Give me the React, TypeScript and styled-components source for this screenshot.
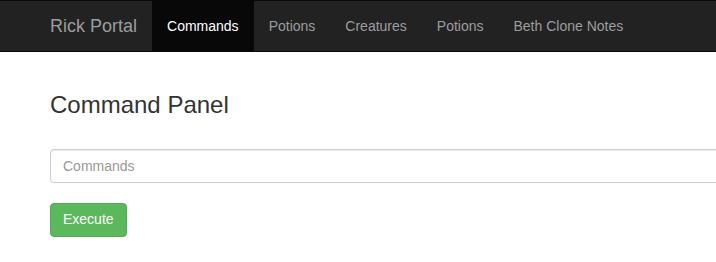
import React from "react";
import styled, { createGlobalStyle } from "styled-components";

const GlobalStyle = createGlobalStyle`
  html, body {
    margin: 0;
    padding: 0;
    background: #fff;
    font-family: "Liberation Sans", Arial, sans-serif;
    font-size: 14px;
    line-height: 1.42857;
    color: #333;
  }
  * {
    box-sizing: border-box;
  }
`;

const Navbar = styled.nav`
  display: flex;
  align-items: stretch;
  height: 52px;
  padding-left: 35px;
  background: #222;
  border-top: 1px solid #080808;
  border-bottom: 1px solid #080808;
`;

const Brand = styled.a`
  display: flex;
  align-items: center;
  padding: 0 15px;
  font-size: 18px;
  line-height: 20px;
  color: #9d9d9d;
  text-decoration: none;
`;

const NavList = styled.ul`
  display: flex;
  margin: 0;
  padding: 0;
  list-style: none;
`;

const NavItem = styled.li<{ $active?: boolean }>`
  display: flex;
  align-items: center;
  padding: 0 15px;
  line-height: 20px;
  color: ${p => (p.$active ? "#fff" : "#9d9d9d")};
  background: ${p => (p.$active ? "#080808" : "transparent")};
  cursor: pointer;
`;

const Container = styled.main`
  padding: 20px 0 0 50px;
`;

const Title = styled.h3`
  margin: 20px 0 10px;
  font-size: 24px;
  font-weight: 500;
  line-height: 1.1;
  color: #333;
`;

const FormGroup = styled.div`
  margin: 31px 0 20px;
`;

const CommandInput = styled.input`
  display: block;
  width: 700px;
  height: 34px;
  padding: 6px 12px;
  font-family: inherit;
  font-size: 14px;
  color: #555;
  background: #fff;
  border: 1px solid #ccc;
  border-radius: 4px;
  box-shadow: inset 0 1px 1px rgba(0, 0, 0, 0.075);
  outline: none;
  &::placeholder {
    color: #999;
  }
`;

const ExecuteButton = styled.button`
  height: 34px;
  padding: 6px 12px;
  font-family: inherit;
  font-size: 14px;
  line-height: 1.42857;
  color: #fff;
  background: #5cb85c;
  border: 1px solid #4cae4c;
  border-radius: 4px;
  cursor: pointer;
`;

const links = ["Commands", "Potions", "Creatures", "Potions", "Beth Clone Notes"];

export default function App() {
  return (
    <>
      <GlobalStyle />
      <Navbar>
        <Brand href="#">Rick Portal</Brand>
        <NavList>
          {links.map((link, i) => (
            <NavItem key={i} $active={i === 0}>
              {link}
            </NavItem>
          ))}
        </NavList>
      </Navbar>
      <Container>
        <Title>Command Panel</Title>
        <FormGroup>
          <CommandInput placeholder="Commands" />
        </FormGroup>
        <ExecuteButton>Execute</ExecuteButton>
      </Container>
    </>
  );
}
